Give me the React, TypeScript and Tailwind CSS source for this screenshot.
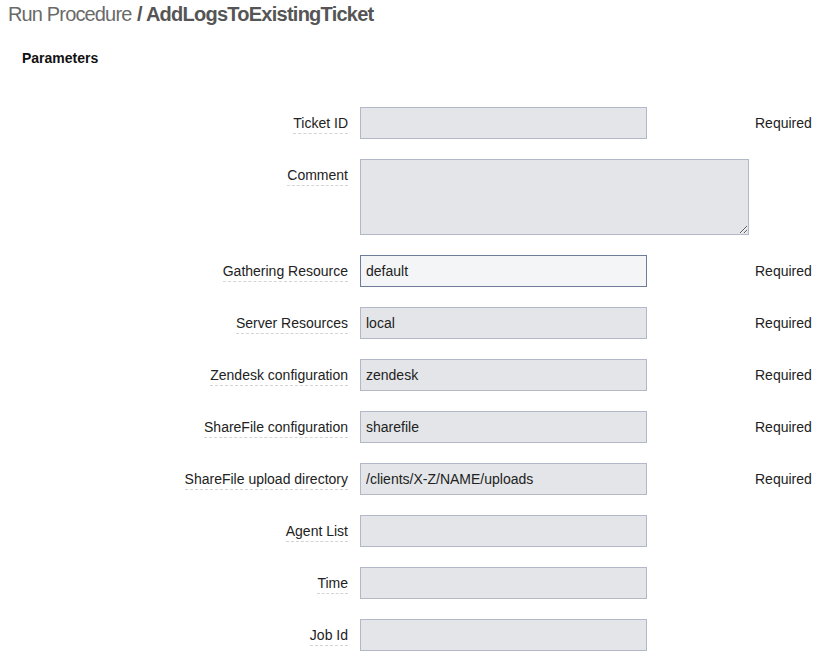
const fields = [
  { label: "Ticket ID", value: "", required: true },
  { label: "Comment", value: "", multiline: true },
  { label: "Gathering Resource", value: "default", required: true, focused: true },
  { label: "Server Resources", value: "local", required: true },
  { label: "Zendesk configuration", value: "zendesk", required: true },
  { label: "ShareFile configuration", value: "sharefile", required: true },
  { label: "ShareFile upload directory", value: "/clients/X-Z/NAME/uploads", required: true },
  { label: "Agent List", value: "" },
  { label: "Time", value: "" },
  { label: "Job Id", value: "" },
];

export default function App() {
  return (
    <div className="w-[829px] h-[660px] bg-white overflow-hidden text-[#222] font-['Liberation_Sans',Arial,sans-serif]">
      <h1 className="pl-2 pt-[1px] text-[20px] leading-[26px]">
        <span className="font-normal text-[#6a6a6a] tracking-[-0.85px]">Run Procedure</span>{" "}
        <span className="font-bold text-[#555] tracking-[-0.75px]">/ AddLogsToExistingTicket</span>
      </h1>

      <h2 className="pl-[22px] mt-[22px] text-[14px] font-bold leading-[18px] text-[#111]">Parameters</h2>

      <div className="mt-[40px] flex flex-col gap-5">
        {fields.map((f) => (
          <div key={f.label} className="flex items-start">
            <div className="w-[360px] pr-3 pt-[8px] text-right text-[14px] leading-[17px]">
              <span className="border-b border-dashed border-[#d4d4d4] pb-[2px]">{f.label}</span>
            </div>
            <div className="w-[395px]">
              {f.multiline ? (
                <textarea
                  className="block w-[389px] h-[76px] bg-[#e4e5e8] border border-[#b3b8c8] outline-none px-[5px] py-1 text-[14px]"
                  defaultValue={f.value}
                />
              ) : (
                <input
                  className={`block w-[287px] h-[32px] border outline-none px-[5px] text-[14px] text-[#222] ${
                    f.focused ? "bg-[#f4f5f7] border-[#6e7b99]" : "bg-[#e4e5e8] border-[#b3b8c8]"
                  }`}
                  defaultValue={f.value}
                  readOnly
                />
              )}
            </div>
            {f.required && (
              <div className="pt-[8px] text-[14px] leading-[17px] text-[#222]">Required</div>
            )}
          </div>
        ))}
      </div>
    </div>
  );
}
